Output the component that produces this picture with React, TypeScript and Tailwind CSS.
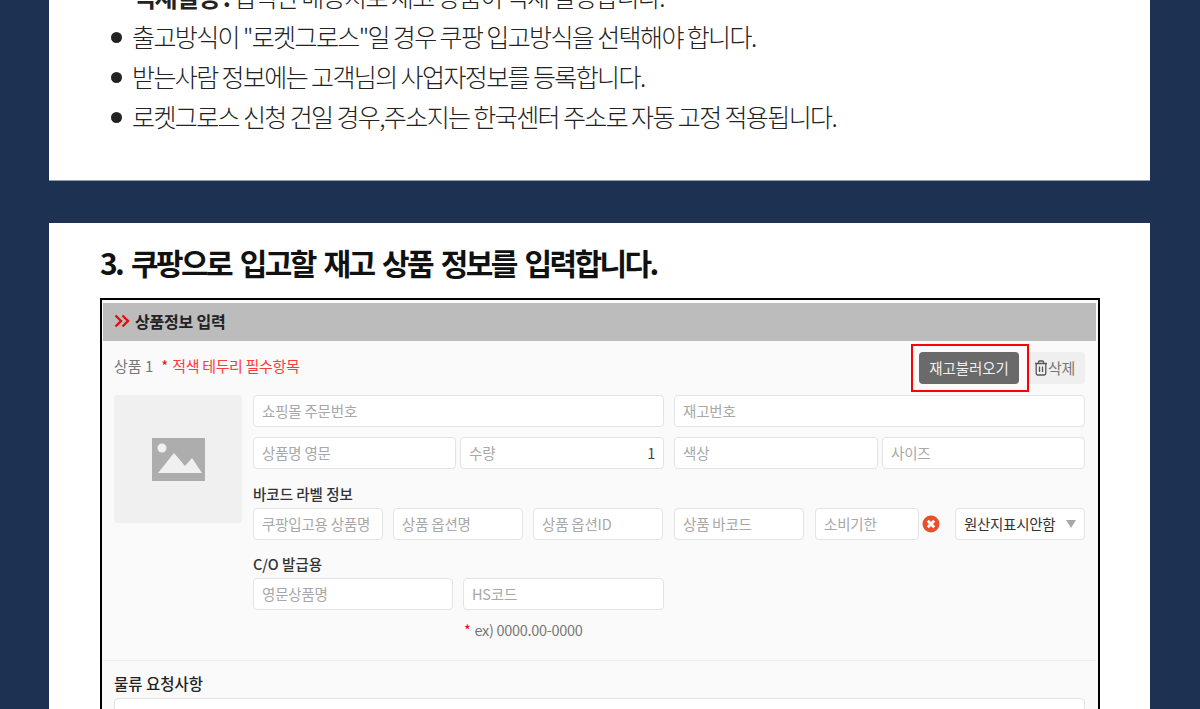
const KR = "font-['Noto_Sans_CJK_KR','Noto_Sans',sans-serif]";

function Field({ w, text, right }: { w: string; text: string; right?: string }) {
  return (
    <div className={`${w} h-[32px] shrink-0 bg-white border border-[#e3e3e3] rounded-[4px] flex items-center justify-between pl-2 pr-2 text-[14.5px] text-[#a8a8a8] tracking-[-0.2px]`}>
      <span>{text}</span>
      {right && <span className="text-[#444]">{right}</span>}
    </div>
  );
}

function Bullet({ children }: { children: React.ReactNode }) {
  return (
    <li className="flex items-center h-[40px]">
      <span className="w-[11px] h-[11px] rounded-full bg-[#222] mr-[11px] shrink-0" />
      <span>{children}</span>
    </li>
  );
}

export default function App() {
  return (
    <div className={`${KR} h-[709px] overflow-hidden bg-[#1d3152]`}>
      <div className="mx-[49px] w-[1101px] h-[181px] bg-white overflow-hidden border-b border-[#8e9bb0]">
        <ul className="pl-[62px] -mt-[23px] text-[25px] text-[#222] tracking-[-1.6px] font-light">
          <li className="h-[40px] pl-[22px] flex items-center">
            <b className="font-bold">적재설정 :</b>&nbsp;입력한 배송지로 재고 상품이 적재 설정합니다.
          </li>
          <Bullet>
            <span className="-ml-px">출고방식이 "로켓그로스"일 경우 쿠팡 입고방식을 선택해야 합니다.</span>
          </Bullet>
          <Bullet>
            <span className="-ml-px">받는사람 정보에는 고객님의 사업자정보를 등록합니다.</span>
          </Bullet>
          <Bullet>
            <span className="-ml-px">로켓그로스 신청 건일 경우,주소지는 한국센터 주소로 자동 고정 적용됩니다.</span>
          </Bullet>
        </ul>
      </div>

      <div className="mx-[49px] mt-[42px] w-[1101px] h-[486px] bg-white px-[51px] overflow-hidden">
        <h2 className="h-[75px] pt-[3px] flex items-center text-[30px] font-bold text-[#111] tracking-[-2.6px] [word-spacing:4.5px]">
          3. 쿠팡으로 입고할 재고 상품 정보를 입력합니다.
        </h2>
        <div className="w-[1000px] h-[500px] border-2 border-black bg-[#fafafa] pt-[3px] pl-px pr-[2px]">
          <div className="h-[38px] bg-[#bcbcbc] flex items-center pl-[11px] pb-[3px] text-[16px] font-bold text-[#222] tracking-[-0.2px]">
            <svg width="16" height="14" viewBox="0 0 16 14" className="mr-[5px]" fill="none" stroke="#e01010" strokeWidth="2.4">
              <path d="M1.5 1.5 7 7l-5.5 5.5M8.5 1.5 14 7l-5.5 5.5" />
            </svg>
            상품정보 입력
          </div>

          <div className="px-[11px]">
            <div className="h-[54px] flex items-center justify-between">
              <div className="text-[15px] text-[#777] mb-[3px]">
                상품 1
                <span className="text-[#e01010] ml-[8px]">*</span>
                <span className="text-[#ff3b3b] ml-[4px] tracking-[-0.35px]">적색 테두리 필수항목</span>
              </div>
              <div className="flex items-center">
                <div className="w-[118px] h-[48px] border-2 border-[#ff0000] pl-[6px] flex items-center">
                  <button className="w-[100px] h-[32px] rounded-[4px] bg-[#6a6a6a] text-[#f0f0f0] text-[14.5px] tracking-[-0.1px]">재고불러오기</button>
                </div>
                <button className="w-[56px] h-[32px] bg-[#efefef] rounded-r-[4px] flex items-center pl-[5px] text-[15px] text-[#777] tracking-[-0.4px]">
                  <svg width="14" height="16" viewBox="0 0 14 16" fill="none" stroke="#555" strokeWidth="1.3">
                    <path d="M1 3.5h12M4.5 3.5V2a1 1 0 0 1 1-1h3a1 1 0 0 1 1 1v1.5M2.2 3.5v9.8a1.7 1.7 0 0 0 1.7 1.7h6.2a1.7 1.7 0 0 0 1.7-1.7V3.5M5.5 6.5v5.5M8.5 6.5v5.5" />
                  </svg>
                  삭제
                </button>
              </div>
            </div>

            <div className="flex gap-[11px]">
              <div className="w-[128px] h-[128px] shrink-0 bg-[#f0f0f0] rounded-[4px] flex items-center justify-center">
                <svg width="53" height="43" viewBox="0 0 53 43">
                  <rect width="53" height="43" fill="#adadad" />
                  <circle cx="10" cy="10" r="4.5" fill="#f0f0f0" />
                  <path d="M6 35 22 15l11 13 7-8 10 15z" fill="#f0f0f0" />
                </svg>
              </div>
              <div className="flex-1">
                <div className="flex gap-[10px]">
                  <Field w="w-[411px]" text="쇼핑몰 주문번호" />
                  <Field w="w-[411px]" text="재고번호" />
                </div>
                <div className="flex gap-[10px] mt-[10px]">
                  <div className="w-[411px] flex gap-[4px]">
                    <Field w="w-[203px]" text="상품명 영문" />
                    <Field w="w-[204px]" text="수량" right="1" />
                  </div>
                  <div className="w-[411px] flex gap-[4px]">
                    <Field w="w-[204px]" text="색상" />
                    <Field w="w-[203px]" text="사이즈" />
                  </div>
                </div>
                <div className="mt-[15px] h-[20px] flex items-center text-[14.5px] font-medium text-[#333]">바코드 라벨 정보</div>
                <div className="flex items-center mt-[4px]">
                  <Field w="w-[130px] mr-[10px]" text="쿠팡입고용 상품명" />
                  <Field w="w-[130px] mr-[10px]" text="상품 옵션명" />
                  <Field w="w-[130px] mr-[11px]" text="상품 옵션ID" />
                  <Field w="w-[130px] mr-[11px]" text="상품 바코드" />
                  <Field w="w-[104px] mr-[3px]" text="소비기한" />
                  <svg width="18" height="18" viewBox="0 0 18 18" className="mr-[15px] shrink-0">
                    <circle cx="9" cy="9" r="8.5" fill="#e8502a" />
                    <path d="M5.8 5.8l6.4 6.4M12.2 5.8l-6.4 6.4" stroke="#fff" strokeWidth="2.8" />
                  </svg>
                  <div className="w-[130px] h-[32px] bg-white border border-[#e3e3e3] rounded-[4px] flex items-center justify-between pl-2 pr-2 text-[14.5px] text-[#333] tracking-[-0.3px]">
                    <span>원산지표시안함</span>
                    <svg width="10" height="8" viewBox="0 0 10 8"><path d="M0 0h10L5 8z" fill="#a8a8a8" /></svg>
                  </div>
                </div>
                <div className="mt-[14px] h-[20px] flex items-center text-[14.5px] font-medium text-[#333]">C/O 발급용</div>
                <div className="flex gap-[10px] mt-[4px]">
                  <Field w="w-[200px]" text="영문상품명" />
                  <Field w="w-[201px]" text="HS코드" />
                </div>
                <div className="mt-[10px] h-[20px] pl-[211px] flex items-center text-[14.5px] text-[#777] tracking-[-0.3px]">
                  <span className="text-[#e01010] mr-1">*</span>ex) 0000.00-0000
                </div>
              </div>
            </div>
          </div>

          <div className="mt-[20px] border-t border-[#ececec] px-[11px]">
            <div className="h-[37px] pt-[10px] leading-[24px] text-[15.5px] font-medium text-[#222]">물류 요청사항</div>
            <div className="h-[60px] bg-white border border-[#e3e3e3] rounded-[4px]" />
          </div>
        </div>
      </div>
    </div>
  );
}
